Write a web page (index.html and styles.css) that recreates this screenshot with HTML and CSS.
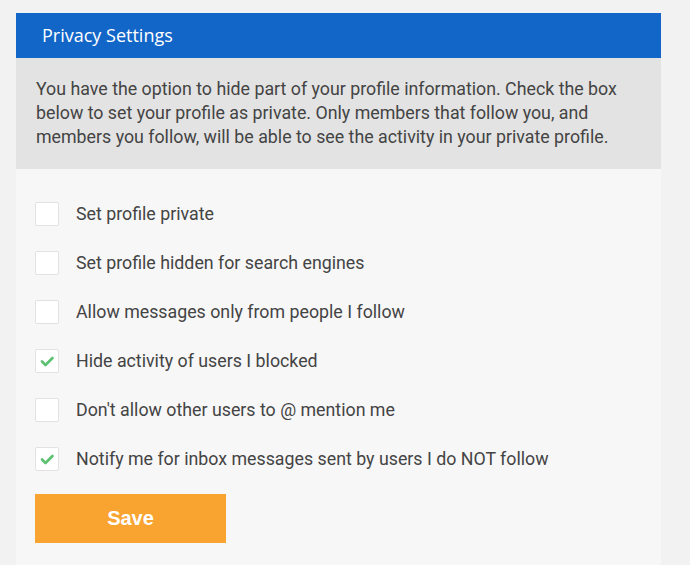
FILE: index.html
```html
<!DOCTYPE html>
<html>
<head>
<meta charset="utf-8">
<link rel="stylesheet" href="styles.css">
</head>
<body>
<div class="card">
  <div class="header">Privacy Settings</div>
  <div class="desc">You have the option to hide part of your profile information. Check the box below to set your profile as private. Only members that follow you, and members you follow, will be able to see the activity in your private profile.</div>
  <div class="options">
    <label class="row"><span class="box"></span><span class="label">Set profile private</span></label>
    <label class="row"><span class="box"></span><span class="label">Set profile hidden for search engines</span></label>
    <label class="row"><span class="box"></span><span class="label">Allow messages only from people I follow</span></label>
    <label class="row"><span class="box"><svg viewBox="0 0 22 22" width="22" height="22"><path d="M6 11.5 L9.5 15 L16.5 8" fill="none" stroke="#5cc170" stroke-width="2.6" stroke-linecap="round" stroke-linejoin="round"/></svg></span><span class="label">Hide activity of users I blocked</span></label>
    <label class="row"><span class="box"></span><span class="label">Don't allow other users to @ mention me</span></label>
    <label class="row"><span class="box"><svg viewBox="0 0 22 22" width="22" height="22"><path d="M6 11.5 L9.5 15 L16.5 8" fill="none" stroke="#5cc170" stroke-width="2.6" stroke-linecap="round" stroke-linejoin="round"/></svg></span><span class="label">Notify me for inbox messages sent by users I do NOT follow</span></label>
    <button class="save">Save</button>
  </div>
</div>
</body>
</html>
```
FILE: styles.css
```css
html, body {
  margin: 0;
  height: 100%;
  background: #f2f2f2;
}
body {
  padding: 13px 0 0 16px;
  box-sizing: border-box;
}
.card {
  width: 645px;
  min-height: 552px;
  background: #f7f7f7;
}
.header {
  height: 45px;
  background: #1266c8;
  color: #fff;
  font-family: "Open Sans", sans-serif;
  font-size: 18px;
  line-height: 45px;
  padding-left: 26px;
}
.desc {
  background: #e3e3e3;
  padding: 19px 20px 20px 20px;
  font-family: Roboto, sans-serif;
  font-size: 17.8px;
  line-height: 24px;
  color: #444;
}
.options {
  padding: 20px 0 0 19px;
  display: flex;
  flex-direction: column;
  align-items: flex-start;
}
.row {
  height: 49px;
  display: flex;
  align-items: center;
}
.box {
  width: 22px;
  height: 22px;
  background: #fff;
  border: 1px solid #e2e2e2;
  border-radius: 2px;
  display: flex;
  align-items: center;
  justify-content: center;
}
.label {
  margin-left: 17px;
  font-family: Roboto, sans-serif;
  font-size: 17.8px;
  color: #444;
}
.save {
  margin-top: 11px;
  width: 191px;
  height: 49px;
  border: none;
  background: #f9a431;
  color: #fff;
  font-family: "Liberation Sans", Arial, sans-serif;
  font-weight: bold;
  font-size: 20px;
  padding: 0;
}
```
